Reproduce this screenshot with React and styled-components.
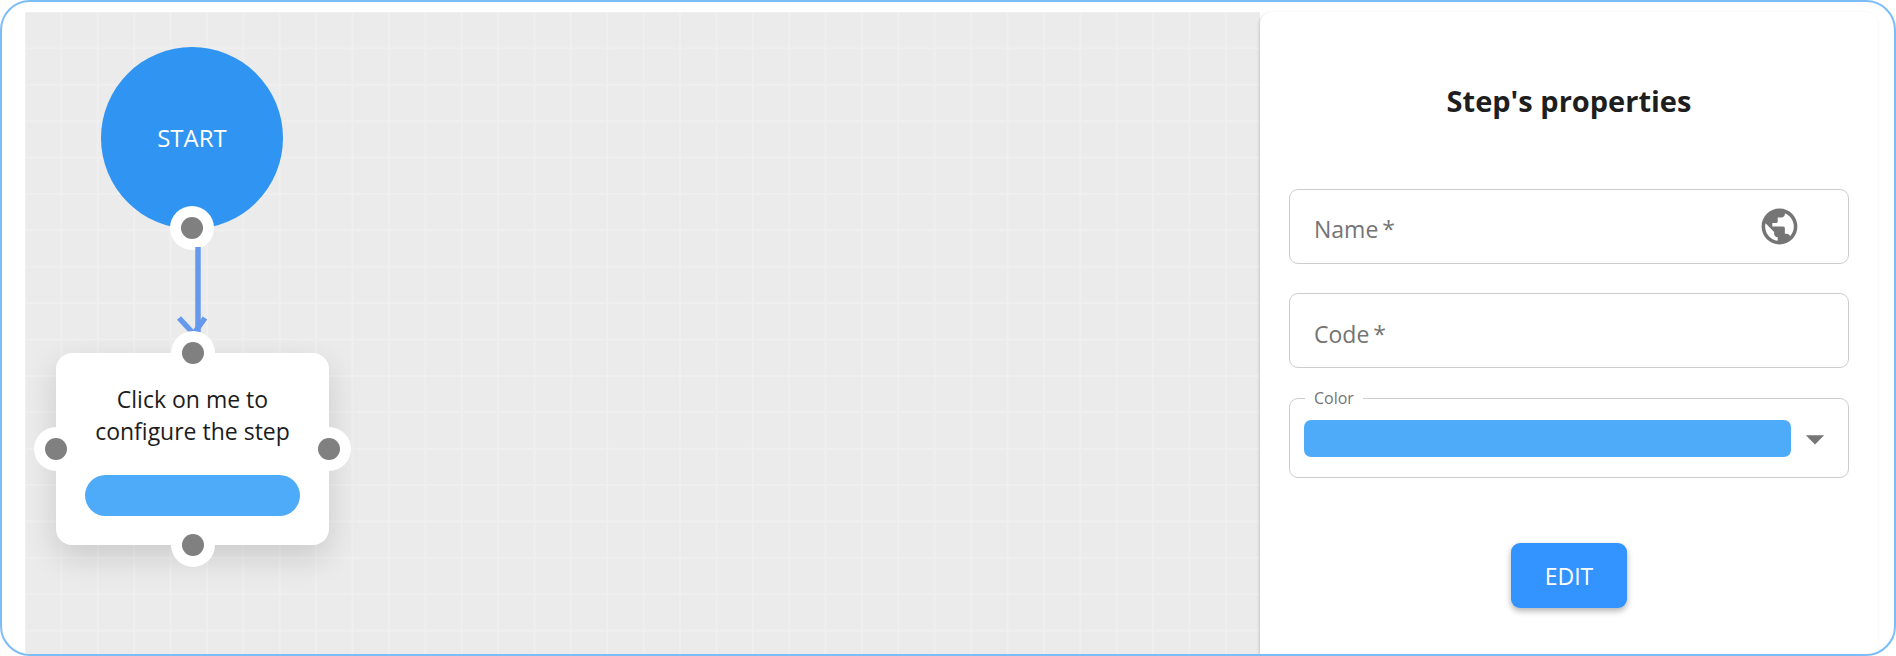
import React from "react";
import styled, { createGlobalStyle } from "styled-components";
import { MdPublic, MdArrowDropDown } from "react-icons/md";

const GlobalStyle = createGlobalStyle`
  html, body {
    margin: 0;
    padding: 0;
    background: #fff;
  }
  * {
    box-sizing: border-box;
  }
  body {
    font-family: "Open Sans", "Liberation Sans", sans-serif;
  }
`;

const Frame = styled.div`
  width: 1896px;
  height: 656px;
  display: flex;
  padding: 10px 16px 0 23px;
  border: 2px solid #7cbdf8;
  border-radius: 30px;
  background: #fff;
  overflow: hidden;
`;

const Canvas = styled.div`
  position: relative;
  flex: 1;
  background-color: #ebebeb;
  background-image: linear-gradient(to right, #efefef 2px, transparent 2px),
    linear-gradient(to bottom, #efefef 2px, transparent 2px);
  background-size: 36.4px 36.4px;
  background-position: -1px -1px;
`;

const StartNode = styled.div`
  position: absolute;
  left: 76px;
  top: 35px;
  width: 182px;
  height: 182px;
  display: flex;
  align-items: center;
  justify-content: center;
  padding-bottom: 2px;
  border-radius: 50%;
  background: #2f94f2;
  color: #fff;
  font-size: 24px;
`;

const Link = styled.svg`
  position: absolute;
  left: 140px;
  top: 225px;
  overflow: visible;
`;

const StepNode = styled.div`
  position: absolute;
  left: 31px;
  top: 341px;
  width: 273px;
  height: 192px;
  display: flex;
  flex-direction: column;
  align-items: center;
  padding-top: 30px;
  border-radius: 16px;
  background: #fff;
  box-shadow: 0 12px 32px rgba(0, 0, 0, 0.14);
`;

const StepLabel = styled.div`
  font-size: 23px;
  line-height: 32px;
  color: #1c1c1c;
  text-align: center;
  white-space: nowrap;
`;

const StepColor = styled.div`
  width: 215px;
  height: 41px;
  margin-top: 28px;
  border-radius: 21px;
  background: #4eabf9;
`;

const portPlaces = {
  top: "left: 50%; top: 0;",
  bottom: "left: 50%; top: 100%;",
  left: "left: 0; top: 50%;",
  right: "left: 100%; top: 50%;",
  foot: "left: 50%; top: calc(100% - 1px);",
};

const Port = styled.span`
  position: absolute;
  ${(p) => portPlaces[p.$side]}
  width: 44px;
  height: 44px;
  transform: translate(-50%, -50%);
  display: flex;
  align-items: center;
  justify-content: center;
  border-radius: 50%;
  background: #fff;

  &::after {
    content: "";
    width: 22px;
    height: 22px;
    border-radius: 50%;
    background: #808080;
  }
`;

const Panel = styled.aside`
  width: 618px;
  flex: none;
  display: flex;
  flex-direction: column;
  padding: 71px 29px 0;
  border-radius: 12px 12px 0 0;
  background: #fff;
  box-shadow: -1px 1px 3px rgba(0, 0, 0, 0.16);
  position: relative;
`;

const Title = styled.h2`
  margin: 0 0 70px;
  font-size: 29px;
  line-height: 36px;
  font-weight: 700;
  color: #1e1e1e;
  text-align: center;
`;

const Field = styled.div`
  position: relative;
  height: ${(p) => p.$height}px;
  margin-bottom: ${(p) => p.$gap}px;
  display: flex;
  align-items: center;
  justify-content: space-between;
  border: 1.5px solid #cdcdcd;
  border-radius: 9px;
`;

const Placeholder = styled.span`
  margin-left: 24px;
  margin-top: ${(p) => p.$nudge}px;
  font-size: 23px;
  color: #747474;
`;

const Required = styled.span`
  margin-left: 4px;
`;

const GlobeIcon = styled(MdPublic)`
  margin-right: 47px;
  margin-top: -1px;
  font-size: 43px;
  color: #757575;
`;

const Legend = styled.span`
  position: absolute;
  left: 15px;
  top: -12px;
  padding: 0 9px;
  background: #fff;
  font-size: 16px;
  line-height: 22px;
  color: #747474;
`;

const ColorSwatch = styled.div`
  flex: 1;
  height: 37px;
  margin-left: 14px;
  border-radius: 7px;
  background: #4eabf9;
`;

const CaretIcon = styled(MdArrowDropDown)`
  flex: none;
  width: 44px;
  height: 44px;
  margin: 2px 11px 0 2px;
  color: #757575;
`;

const Actions = styled.div`
  display: flex;
  justify-content: center;
  margin-top: 65px;
`;

const EditButton = styled.button`
  width: 116px;
  height: 65px;
  padding: 0;
  border: none;
  border-radius: 9px;
  background: #3393ff;
  color: #fff;
  font-family: inherit;
  font-size: 23px;
  box-shadow: 0 3px 6px rgba(0, 0, 0, 0.3);
`;

export default function App() {
  return (
    <>
      <GlobalStyle />
      <Frame>
        <Canvas>
          <StartNode>
            START
            <Port $side="foot" />
          </StartNode>
          <Link width="70" height="110">
            <path d="M33 10 V95" stroke="#6699ee" strokeWidth="5.5" fill="none" />
            <path d="M14 81 L27 95 M40 81 L30 95" stroke="#6699ee" strokeWidth="5.5" fill="none" />
          </Link>
          <StepNode>
            <Port $side="top" />
            <Port $side="left" />
            <Port $side="right" />
            <Port $side="bottom" />
            <StepLabel>
              Click on me to
              <br />
              configure the step
            </StepLabel>
            <StepColor />
          </StepNode>
        </Canvas>
        <Panel>
          <Title>Step's properties</Title>
          <Field $height={75} $gap={29}>
            <Placeholder $nudge={4}>
              Name<Required>*</Required>
            </Placeholder>
            <GlobeIcon />
          </Field>
          <Field $height={75} $gap={30}>
            <Placeholder $nudge={6}>
              Code<Required>*</Required>
            </Placeholder>
          </Field>
          <Field $height={80} $gap={0}>
            <Legend>Color</Legend>
            <ColorSwatch />
            <CaretIcon />
          </Field>
          <Actions>
            <EditButton>EDIT</EditButton>
          </Actions>
        </Panel>
      </Frame>
    </>
  );
}
